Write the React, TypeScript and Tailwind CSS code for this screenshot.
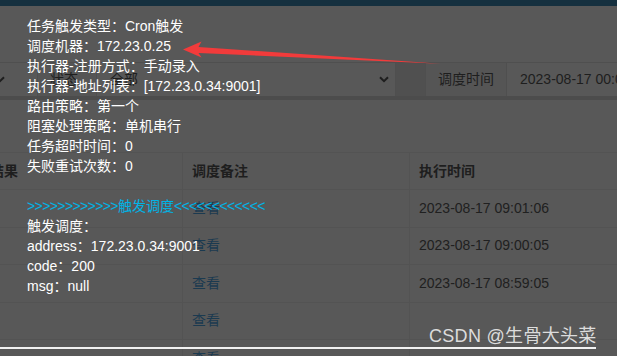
import React from "react";

const Chevron = ({ className = "" }: { className?: string }) => (
  <svg width="10" height="7" viewBox="0 0 10 7" className={className}>
    <path d="M1 1.2 L5 5.2 L9 1.2" fill="none" stroke="#1e1e1e" strokeWidth="2" />
  </svg>
);

const rows = [
  { time: "2023-08-17 09:01:06" },
  { time: "2023-08-17 09:00:05" },
  { time: "2023-08-17 08:59:05" },
  { time: "" },
  { time: "" },
];

const tipLines = [
  "任务触发类型：Cron触发",
  "调度机器：172.23.0.25",
  "执行器-注册方式：手动录入",
  "执行器-地址列表：[172.23.0.34:9001]",
  "路由策略：第一个",
  "阻塞处理策略：单机串行",
  "任务超时时间：0",
  "失败重试次数：0",
];

export default function App() {
  return (
    <div
      className="relative w-[617px] h-[356px] overflow-hidden bg-[#585858] text-[14px] text-[#1e1e1e]"
      style={{ fontFamily: '"Liberation Sans", Arial, "Noto Sans CJK SC", sans-serif' }}
    >
      <div className="h-[6px] bg-[#15303f]" />

      {/* filter row */}
      <div className="mt-[56px] flex h-[34px] border-t border-[#4f4f4f]">
        <div className="flex w-[38px] shrink-0 items-center border-r border-[#4f4f4f] overflow-hidden">
          <Chevron className="-ml-[5px] shrink-0" />
        </div>
        <div className="flex w-[59px] shrink-0 items-center bg-[#555555] pl-[12px] border-r border-[#4f4f4f]">状态</div>
        <div className="flex w-[298px] shrink-0 items-center justify-between pl-[13px] pr-[6px]">
          <span>全部</span>
          <Chevron />
        </div>
        <div className="w-[31px] shrink-0 bg-[#505050] border-x border-[#4f4f4f]" />
        <div className="flex w-[81px] shrink-0 items-center bg-[#555555] pl-[12px] border-r border-[#4f4f4f]">调度时间</div>
        <div className="flex min-w-0 flex-1 items-center overflow-hidden pl-[13px] whitespace-nowrap">2023-08-17 00:00:00</div>
      </div>
      <div className="h-[4px] bg-[#4c4c4c]" />

      {/* table */}
      <div className="mt-[52px] border-t border-[#535353]">
        <div className="flex h-[37px] border-b border-[#535353] font-bold">
          <div className="flex w-[183px] shrink-0 items-center overflow-hidden border-r border-[#535353]">
            <span className="-ml-[38px] shrink-0 whitespace-nowrap">调度结果</span>
          </div>
          <div className="flex w-[227px] shrink-0 items-center border-r border-[#535353] pl-[9px]">调度备注</div>
          <div className="flex min-w-0 flex-1 items-center pl-[9px]">执行时间</div>
        </div>
        {rows.map((r, i) => (
          <div key={i} className="flex h-[37.5px] border-b border-[#535353]">
            <div className="w-[183px] shrink-0 border-r border-[#535353]" />
            <div className="flex w-[227px] shrink-0 items-center border-r border-[#535353] pl-[9px] text-[#1b3a50]">查看</div>
            <div className="flex min-w-0 flex-1 items-center pl-[9px] text-[#202020]">{r.time}</div>
          </div>
        ))}
      </div>

      {/* tooltip overlay text */}
      <div className="absolute left-[27px] top-[16px] text-[14px] leading-[20px] text-white whitespace-nowrap">
        {tipLines.map((l) => (
          <div key={l}>{l}</div>
        ))}
        <div className="h-[20px]" />
        <div className="text-[#00b4e6]">
          <span className="tracking-[-0.6px]">&gt;&gt;&gt;&gt;&gt;&gt;&gt;&gt;&gt;&gt;&gt;&gt;</span>触发调度
          <span className="tracking-[-0.6px]">&lt;&lt;&lt;&lt;&lt;&lt;&lt;&lt;&lt;&lt;&lt;&lt;</span>
        </div>
        <div>触发调度：</div>
        <div>address：172.23.0.34:9001</div>
        <div>code：200</div>
        <div>msg：null</div>
      </div>

      {/* red arrow */}
      <svg className="absolute left-0 top-0" width="617" height="356" viewBox="0 0 617 356">
        <polygon
          points="183,49.5 201.5,41.5 198.5,47 441,63.8 198.5,53 201.5,57.5"
          fill="#f23b3b"
        />
      </svg>

      {/* watermark */}
      <div
        className="absolute left-[429px] top-[324px] text-[18px] leading-[24px] tracking-[0.3px] text-[#dcdcdc] whitespace-nowrap"
        style={{ fontFamily: '"Liberation Sans Narrow", "Liberation Sans", "Noto Sans CJK SC", sans-serif' }}
      >
        CSDN @生骨大头菜
      </div>
      <div className="absolute left-0 top-[347px] h-[1.5px] w-[596px] bg-[#f2f2f2]" />
    </div>
  );
}
